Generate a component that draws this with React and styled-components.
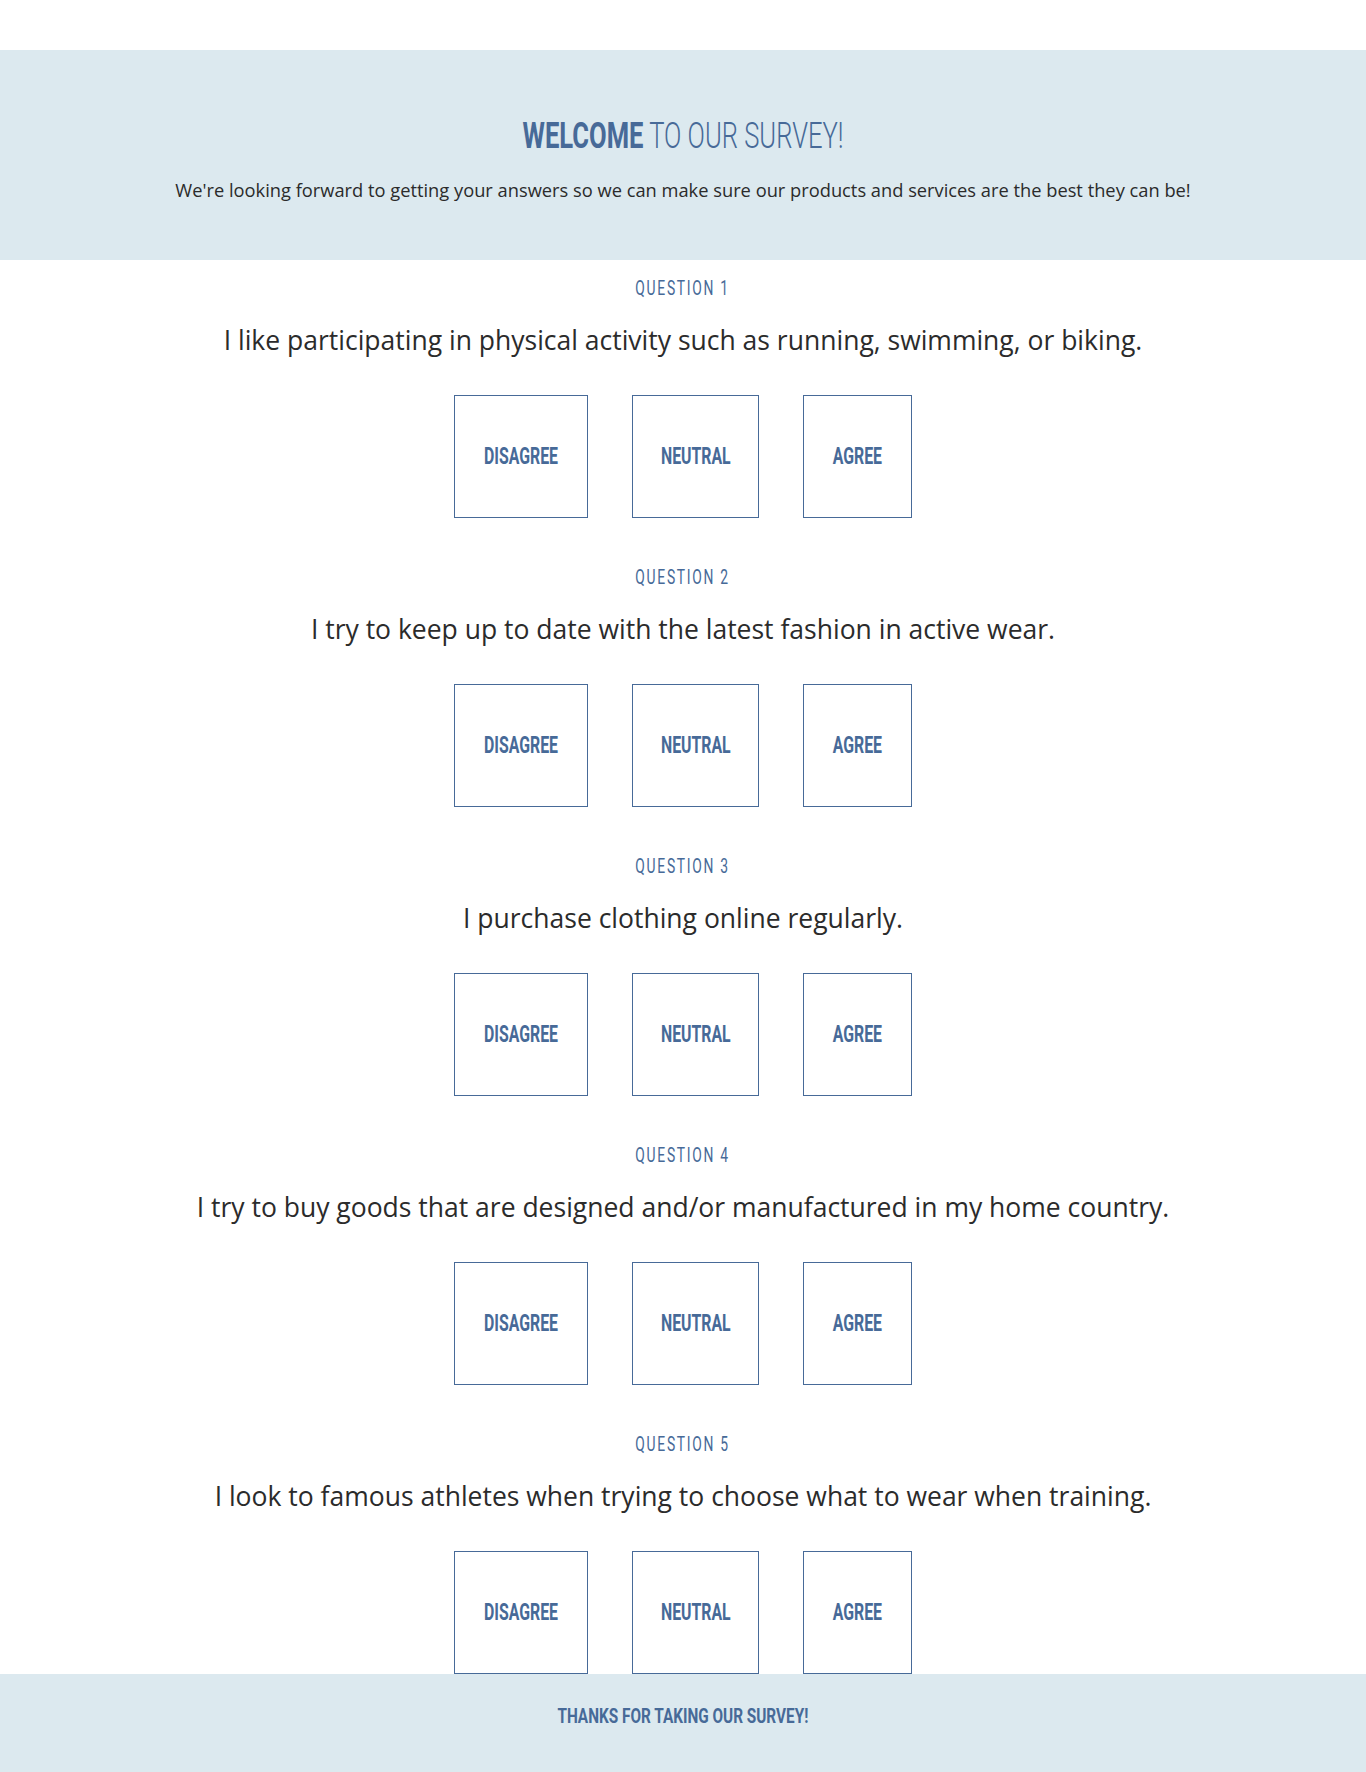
import React from 'react'
import styled, { createGlobalStyle } from 'styled-components'

const GlobalStyle = createGlobalStyle`
  body {
    margin: 0;
    background: #ffffff;
    font-family: "Open Sans", "Noto Sans", sans-serif;
    color: #2b2b2b;
  }
`

const BLUE = '#476a98'
const PALE = '#dce9ef'

// no condensed face installed, so the Oswald-like headings are squeezed horizontally
const Squeeze = styled.span`
  display: inline-block;
  vertical-align: top;
  font-family: "Roboto", "Liberation Sans", sans-serif;
  transform: scaleX(${p => p.$k || 0.66});
  transform-origin: center;
  white-space: nowrap;
`

const Page = styled.div`
  width: 1366px;
  padding-top: 50px;
`

const Header = styled.header`
  background: ${PALE};
  height: 210px;
  box-sizing: border-box;
  padding-top: 64px;
  text-align: center;
`

const Title = styled.h1`
  margin: 0;
  font-weight: 300;
  font-size: 36px;
  line-height: 44px;
  color: ${BLUE};
  & strong {
    font-weight: 700;
  }
`

const Intro = styled.p`
  margin: 20px 0 0;
  font-size: 18.3px;
  line-height: 24px;
  color: #2b2b2b;
`

const Section = styled.section`
  padding-top: 16px;
  margin-bottom: 31px;
  text-align: center;
  &:last-of-type {
    margin-bottom: 0;
  }
`

const Label = styled.div`
  font-weight: 400;
  font-size: 21px;
  line-height: 24px;
  letter-spacing: 2.6px;
  color: ${BLUE};
`

const Prompt = styled.p`
  margin: 22px 0 0;
  font-size: 26.5px;
  line-height: 36px;
  color: #2b2b2b;
`

const Choices = styled.div`
  display: flex;
  justify-content: center;
  gap: 44px;
  margin-top: 37px;
`

const Choice = styled.button`
  width: ${p => p.$w}px;
  box-sizing: border-box;
  background: #ffffff;
  border: 1px solid ${BLUE};
  border-radius: 0;
  padding: 48px 0;
  font-weight: 700;
  font-size: 24px;
  line-height: 25px;
  color: ${BLUE};
  text-align: center;
  cursor: pointer;
`

const Footer = styled.footer`
  background: ${PALE};
  height: 100px;
  box-sizing: border-box;
  padding-top: 30px;
  text-align: center;
  font-weight: 700;
  font-size: 21px;
  line-height: 24px;
  color: ${BLUE};
`

const questions = [
  'I like participating in physical activity such as running, swimming, or biking.',
  'I try to keep up to date with the latest fashion in active wear.',
  'I purchase clothing online regularly.',
  'I try to buy goods that are designed and/or manufactured in my home country.',
  'I look to famous athletes when trying to choose what to wear when training.',
]

const options = [
  { text: 'DISAGREE', width: 134 },
  { text: 'NEUTRAL', width: 127 },
  { text: 'AGREE', width: 109 },
]

export default function App() {
  return (
    <>
      <GlobalStyle />
      <Page>
        <Header>
          <Title>
            <Squeeze $k={0.71}><strong>WELCOME</strong> TO OUR SURVEY!</Squeeze>
          </Title>
          <Intro>We're looking forward to getting your answers so we can make sure our products and services are the best they can be!</Intro>
        </Header>
        <main>
          {questions.map((q, i) => (
            <Section key={i}>
              <Label><Squeeze>QUESTION {i + 1}</Squeeze></Label>
              <Prompt>{q}</Prompt>
              <Choices>
                {options.map(o => (
                  <Choice key={o.text} $w={o.width}>
                    <Squeeze>{o.text}</Squeeze>
                  </Choice>
                ))}
              </Choices>
            </Section>
          ))}
        </main>
        <Footer><Squeeze $k={0.73}>THANKS FOR TAKING OUR SURVEY!</Squeeze></Footer>
      </Page>
    </>
  )
}
